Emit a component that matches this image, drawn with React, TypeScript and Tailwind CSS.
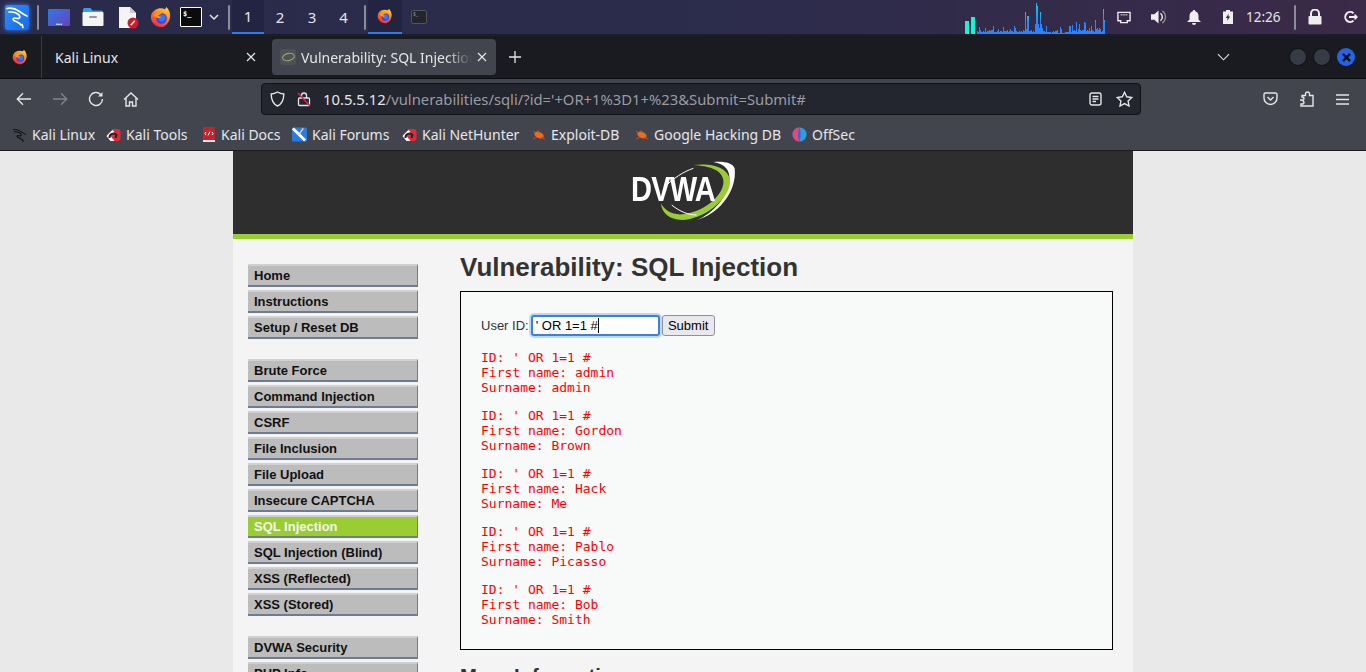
import React from "react";

const ui = { fontFamily: '"Noto Sans", sans-serif' };

function Firefox({ size = 22 }: { size?: number }) {
  return (
    <svg width={size} height={size} viewBox="0 0 24 24">
      <defs>
        <linearGradient id="ffa" x1="0.700" y1="0" x2="0.200" y2="1">
          <stop offset="0" stopColor="#ffd23a" />
          <stop offset="0.45" stopColor="#ff7a1f" />
          <stop offset="1" stopColor="#e3224d" />
        </linearGradient>
      </defs>
      <path d="M12 2.500c1.500 0 3 .3 4.200 1 .8-.6 1.200-1.500 1.400-2.500 2.600 2 4.400 5.500 4.400 9.500 0 6-4.500 12.500-10 12.500S1 18 1 12.500c0-2 .6-3.900 1.500-5.400C3.700 6 4.500 5 5.500 4.300 7.300 3.100 9.600 2.500 12 2.500z" fill="url(#ffa)" />
      <circle cx="12.500" cy="13.500" r="5.800" fill="#5a3bd0" />
      <circle cx="13" cy="13" r="3.800" fill="#2f7bf0" />
      <path d="M4 9.500C7 7 11 6.500 13.500 8.500c-2.500 0-4 1-4.500 2.500 1 .5 2.500.5 3.500 1-1.500 1.500-4 1.500-5.500.5C5.800 11.700 5 10.700 4 9.500z" fill="#ff9a26" />
    </svg>
  );
}

function KaliDragon({ color = "#fff", size = 24 }: { color?: string; size?: number }) {
  return (
    <svg width={size} height={size} viewBox="0 0 24 24" fill="none" stroke={color} strokeWidth="1.700" strokeLinecap="round" strokeLinejoin="round">
      <path d="M2 3.500c5-1 9 .5 12.500 3 2.500 1.800 5 3.500 7.500 4.500" />
      <path d="M4 7c3-.5 7 .5 9.500 2.500 1.500 1.200 1.800 3 .5 3.800-1.300.8-3-.3-4.500-.3-1.500 0-2 1.500-.5 2.500 2 1.300 5 1.500 7 4.500" />
      <path d="M17 19.500c.5 1 .8 2 .8 3" />
    </svg>
  );
}

function KaliTile() {
  return (
    <div className="w-6 h-[25px] rounded-[2px] flex items-center justify-center shadow-[0_0_5px_#2b7bff] bg-[linear-gradient(135deg,#2f8cff,#1a6ae0)]">
      <KaliDragon />
    </div>
  );
}

function TermIcon() {
  return (
    <div className="w-[22px] h-5 bg-[#0b0b0d] border border-white rounded-[1px] text-white text-[7px] leading-[9px] font-bold pl-[2px] pt-[2px]" style={{ fontFamily: '"DejaVu Sans Mono", monospace' }}>
      $_
    </div>
  );
}

function NetGraph() {
  const h = [3,2,7,4,2,2,3,2,6,2,3,3,4,3,4,4,8,2,2,2,3,5,2,3,3,2,7,3,3,3,4,2,3,5,3,3,2,8,6,3,2,2,3,2,3,2,4,3,22,5,18,18,3,3,4,2,3,2,10,31,28,10,6,22,10,6,3,3,2,8,2,2,2,2,1,2,3,2,3,3,4,1,1,7,5,1,1,1,2,2,2,2,8,8,2,9,3,4,3,12,2,5,10,4,3,4,4,12,11,3,4,3,6,3,8,4,3,2,14,5,6,4,6,5,2,3,25,14];
  return (
    <div className="flex items-end h-[34px] w-[140px]">
      <div className="w-[4px] h-[13px] bg-[#14f5d6]" />
      <div className="w-[4px] h-[17px] ml-[2px] mr-[2px] bg-[#14f5d6]" />
      {h.map((v, i) => (
        <div key={i} className="w-[1px] bg-[linear-gradient(0deg,#2a84ff_0%,#2a84ff_12px,#14c8e6_100%)]" style={{ height: v }} />
      ))}
    </div>
  );
}

function Sep() {
  return <div className="w-[2px] h-[25px] bg-[#8d8d99] rounded-sm" />;
}

function TopPanel() {
  return (
    <div className="h-[36px] flex items-center bg-[linear-gradient(90deg,#2a2a4a_0%,#2b2c4c_50%,#3b2a48_100%)] text-[#e6e6e6] border-b-2 border-[#1d1d27]" style={ui}>
      <div className="pl-[5px] w-[37px]"><KaliTile /></div>
      <Sep />
      <div className="w-[9px]" />
      <div className="w-[22px] h-[17px] rounded-[1px] bg-[linear-gradient(135deg,#2f78e8,#6a42b8)] flex items-end justify-center text-white text-[8px] leading-[8px] font-bold">...</div>
      <div className="w-[12px]" />
      <svg width="22" height="20" viewBox="0 0 22 20"><path d="M1 2.500a1.500 1.500 0 0 1 1.500-1.500h6l2 2.500h9a1.500 1.500 0 0 1 1.500 1.500v1H1z" fill="#3a9af0" /><rect x="0.500" y="5" width="21" height="14" rx="1" fill="#f4f4f4" /><rect x="7" y="9" width="8" height="2" rx="1" fill="#999" /></svg>
      <div className="w-[14px]" />
      <svg width="21" height="23" viewBox="0 0 21 23"><path d="M1 1h11l6 6v15H1z" fill="#f4f4f4" /><path d="M12 1l6 6h-6z" fill="#c9c9c9" /><circle cx="15" cy="17" r="5.500" fill="#d3182a" /><path d="M12.800 19.200l4-4.400" stroke="#fff" strokeWidth="1.600" /></svg>
      <div className="w-[11px]" />
      <Firefox />
      <div className="w-[8px]" />
      <TermIcon />
      <svg className="ml-[6px]" width="12" height="12" viewBox="0 0 12 12" fill="none" stroke="#e6e6e6" strokeWidth="1.500"><path d="M2 4l4 4 4-4" /></svg>
      <div className="w-[8px]" />
      <Sep />
      <div className="w-[2px]" />
      <div className="flex h-[34px] text-[15px]">
        <div className="w-[32px] flex items-center justify-center bg-[#232442] border-b-[2px] border-[#2a7cf0]">1</div>
        <div className="w-[32px] flex items-center justify-center">2</div>
        <div className="w-[32px] flex items-center justify-center">3</div>
        <div className="w-[31px] flex items-center justify-center">4</div>
      </div>
      <div className="w-[5px]" />
      <Sep />
      <div className="w-[2px]" />
      <div className="w-[34px] h-[34px] flex items-center justify-center bg-[#232442] border-b-[2px] border-[#2a7cf0]"><Firefox size={16} /></div>
      <div className="w-[34px] h-[34px] flex items-center justify-center">
        <div className="w-[16px] h-[14px] rounded-[2px] bg-[#23252c] border border-[#555] text-[#999] text-[5px] leading-[6px] pl-[1px]">$_</div>
      </div>
      <div className="flex-1" />
      <NetGraph />
      <div className="w-[12px]" />
      <svg width="14" height="13" viewBox="0 0 15 13" fill="none"><path d="M1 1h13v9h-3v2H4v-2H1z" stroke="#eee" strokeWidth="1.500" /><path d="M4 3.500h7" stroke="#eee" strokeWidth="1.500" strokeDasharray="1 1" /></svg>
      <div className="w-[20px]" />
      <svg width="17" height="16" viewBox="0 0 18 16"><path d="M0 5h3.500L8 1v14l-4.500-4H0z" fill="#eee" /><path d="M10 4a5 5 0 0 1 0 8" stroke="#eee" strokeWidth="1.500" fill="none" /><path d="M12 1.500a8 8 0 0 1 0 13" stroke="#888" strokeWidth="1.500" fill="none" /></svg>
      <div className="w-[19px]" />
      <svg width="14" height="15" viewBox="0 0 14 15"><path d="M7 0a1.300 1.300 0 0 1 1.300 1.300C10.500 2 11.500 3.800 11.500 6v3.500L14 12H0l2.500-2.500V6C2.500 3.800 3.500 2 5.700 1.300A1.300 1.300 0 0 1 7 0z" fill="#eee" /><path d="M5 13h4a2 2 0 0 1-4 0z" fill="#eee" /></svg>
      <div className="w-[22px]" />
      <svg width="10" height="14" viewBox="0 0 10 14"><path d="M3 0h4v1.500h3V14H0V1.500h3z" fill="#eee" /><path d="M5.800 3.500L2.800 8h1.800L4 11l3.200-4.500H5.300z" fill="#2c2840" /></svg>
      <div className="w-[13px]" />
      <span className="text-[13.500px] w-[35px] whitespace-nowrap">12:26</span>
      <div className="w-[13px]" />
      <Sep />
      <div className="w-[12px]" />
      <svg width="14" height="16" viewBox="0 0 14 16"><path d="M3 7V4.500a4 4 0 0 1 8 0V7" stroke="#eee" strokeWidth="2" fill="none" /><rect x="0.500" y="7" width="13" height="8.500" rx="1" fill="#eee" /></svg>
      <div className="w-[21px]" />
      <svg width="15" height="14" viewBox="0 0 15 14" fill="none" stroke="#eee" strokeWidth="2"><path d="M10.500 3.200A5 5 0 1 0 10.500 10.800" /><path d="M6 7h8" /><path d="M11.500 4.500L14 7l-2.500 2.500" strokeWidth="1.500" /></svg>
      <div className="w-[8px]" />
    </div>
  );
}

function X({ size = 10, color = "#e6e6e6" }: { size?: number; color?: string }) {
  return (
    <svg width={size} height={size} viewBox="0 0 10 10" stroke={color} strokeWidth="1.200"><path d="M1 1l8 8M9 1l-8 8" /></svg>
  );
}

function TabBar() {
  return (
    <div className="h-[43px] bg-[#1a1b20] flex items-center text-[#e4e5e8] text-[14px] border-b border-[#0d0e11]" style={ui}>
      <div className="w-[42px] flex justify-center border-r border-[#3b3c42] h-full items-center pr-[2px]"><Firefox size={16} /></div>
      <div className="w-[228px] flex items-center pl-[13px] pr-[14px] justify-between">
        <span>Kali Linux</span>
        <X />
      </div>
      <div className="w-[2px]" />
      <div className="w-[224px] h-[36px] bg-[#42454d] rounded-[4px] flex items-center pl-[8px] pr-[9px]">
        <div className="w-[16px] h-[16px] rounded-[3px] bg-[#4f5356] flex items-center justify-center mr-[5px] shrink-0">
          <div className="w-[13px] h-[8px] rounded-[50%] border-[1.500px] border-[#9fb070] -rotate-12" />
        </div>
        <span className="overflow-hidden whitespace-nowrap flex-1 mr-[5px] [mask-image:linear-gradient(90deg,#000_85%,transparent)]">Vulnerability: SQL Injection</span>
        <X />
      </div>
      <svg className="ml-[13px]" width="12" height="12" viewBox="0 0 13 13" stroke="#e6e6e6" strokeWidth="1.400"><path d="M6.500 0v13M0 6.500h13" /></svg>
      <div className="flex-1" />
      <svg width="13" height="8" viewBox="0 0 14 8" fill="none" stroke="#e4e5e8" strokeWidth="1.200"><path d="M1 1l6 6 6-6" /></svg>
      <div className="w-[59px]" />
      <div className="flex items-center gap-[6px] pr-[11px]">
        <div className="w-[18px] h-[18px] rounded-full bg-[#373b45] border border-[#111]" />
        <div className="w-[18px] h-[18px] rounded-full bg-[#373b45] border border-[#111]" />
        <div className="w-[18px] h-[18px] rounded-full bg-[#2464e6] flex items-center justify-center">
          <svg width="9" height="9" viewBox="0 0 10 10" stroke="#06122c" strokeWidth="2.600"><path d="M1 1l8 8M9 1l-8 8" /></svg>
        </div>
      </div>
    </div>
  );
}

function Toolbar() {
  const s = { stroke: "#e4e5e8", strokeWidth: 1.400, fill: "none" };
  return (
    <div className="h-[43px] bg-[#42454d] flex items-center pb-[3px]" style={ui}>
      <div className="w-[16px]" />
      <svg width="16" height="14" viewBox="0 0 16 14" {...s}><path d="M15 7H1.500M7 1.200L1.300 7 7 12.800" /></svg>
      <div className="w-[20px]" />
      <svg width="16" height="14" viewBox="0 0 16 14" {...s} stroke="#80838a"><path d="M1 7h13.500M9 1.200L14.700 7 9 12.800" /></svg>
      <div className="w-[20px]" />
      <svg width="16" height="16" viewBox="0 0 16 16" {...s}><path d="M14.500 8A6.500 6.500 0 1 1 12.600 3.400" /><path d="M14.500 1v4.500H10z" fill="#e4e5e8" stroke="none" /></svg>
      <div className="w-[19px]" />
      <svg width="16" height="15" viewBox="0 0 16 15" {...s}><path d="M1 7.500L8 1l7 6.500" /><path d="M3 6v8h3.500v-4h3v4H13V6" /></svg>
      <div className="w-[122px]" />
      <div className="w-[880px] h-[32px] bg-[#23252f] border border-[#101116] rounded-[4px] flex items-center pl-[8px] pr-[7px]">
        <svg width="15" height="16" viewBox="0 0 15 16" {...s}><path d="M7.500 1C5.500 2.200 3.500 2.800 1.200 3c0 5 1 9.500 6.300 12 5.300-2.500 6.300-7 6.300-12C11.500 2.800 9.500 2.200 7.500 1z" /></svg>
        <div className="w-[12px]" />
        <svg width="14" height="16" viewBox="0 0 14 16" fill="none"><path d="M4.500 7V4.500a2.500 2.500 0 0 1 5 0V7" stroke="#e4e5e8" strokeWidth="1.300" /><rect x="1.500" y="7" width="11" height="7.500" rx="1" stroke="#e4e5e8" strokeWidth="1.300" /><path d="M1 2l12 13" stroke="#e0264a" strokeWidth="1.500" /></svg>
        <div className="w-[12px]" />
        <span className="text-[14.800px] whitespace-nowrap text-[#e6e7ea]">10.5.5.12<span className="text-[#9a9ca2]">/vulnerabilities/sqli/?id='+OR+1%3D1+%23&amp;Submit=Submit#</span></span>
        <div className="flex-1" />
        <svg width="13" height="14" viewBox="0 0 13 14" {...s}><rect x="1" y="1" width="11" height="12" rx="2" /><path d="M3.500 4.500h6M3.500 7h6M3.500 9.500h3.500" /></svg>
        <div className="w-[14px]" />
        <svg width="17" height="16" viewBox="0 0 17 16" {...s}><path d="M8.500 1.300l2.200 4.500 5 .7-3.600 3.500.9 5-4.500-2.400L4 15l.9-5L1.300 6.500l5-.7z" /></svg>
      </div>
      <div className="flex-1" />
      <svg width="15" height="14" viewBox="0 0 15 14" {...s}><path d="M1 2.500A1.500 1.500 0 0 1 2.500 1h10A1.500 1.500 0 0 1 14 2.500V6a6.500 6.500 0 0 1-13 0z" /><path d="M4.500 5l3 3 3-3" /></svg>
      <div className="w-[21px]" />
      <svg width="16" height="16" viewBox="0 0 16 16" {...s}><path d="M1 9h2.500a1.500 1.500 0 1 0 0-3H3V4.500h3.500V3a2 2 0 1 1 4 0v1.500H14V15H2v-2h1.500a1.500 1.500 0 1 0 0-3" /></svg>
      <div className="w-[21px]" />
      <svg width="13" height="11" viewBox="0 0 13 11" stroke="#e4e5e8" strokeWidth="1.400"><path d="M0 1h13M0 5.500h13M0 10h13" /></svg>
      <div className="w-[17px]" />
    </div>
  );
}

function ShieldMark() {
  return (
    <svg width="15" height="14" viewBox="0 0 14 14"><path d="M0 7L6 1h6l2 2v8l-2 2H8z" fill="#e02b3c" /><path d="M0 8l6-6 2 2-4 4 4 5H4z" fill="#fff" /><path d="M3 10a4 4 0 0 1 7-3l-1 3" stroke="#222" strokeWidth="2" fill="none" /></svg>
  );
}

function Bug() {
  return (
    <svg width="14" height="12" viewBox="0 0 14 12"><ellipse cx="7" cy="6" rx="5" ry="3" fill="#ef6a1f" transform="rotate(25 7 6)" /><path d="M1 2l3 2M1 10l4-2M6 1l1 3M13 10l-4-2" stroke="#c85216" strokeWidth="1" /></svg>
  );
}

function Bookmarks() {
  const items: [React.ReactNode, string, string][] = [
    [<KaliDragon color="#111" size={16} />, "Kali Linux", "w-[94px]"],
    [<ShieldMark />, "Kali Tools", "w-[95px]"],
    [<svg width="14" height="15" viewBox="0 0 14 15"><rect x="1" width="12" height="14" rx="1" fill="#c8202c" /><rect x="1" y="13" width="12" height="2" fill="#e8e8e8" /><path d="M4 5L3 6.500 4 8M10 5l1 1.500L10 8M8 4.500L6 8.500" stroke="#fff" strokeWidth="1" fill="none" /></svg>, "Kali Docs", "w-[91px]"],
    [<svg width="16" height="15" viewBox="0 0 16 15"><rect width="16" height="15" rx="2" fill="#2a7be0" /><path d="M1 1l13 13" stroke="#fff" strokeWidth="3" /><path d="M12 1L7 8" stroke="#ddd" strokeWidth="1.500" /></svg>, "Kali Forums", "w-[110px]"],
    [<ShieldMark />, "Kali NetHunter", "w-[129px]"],
    [<Bug />, "Exploit-DB", "w-[103px]"],
    [<Bug />, "Google Hacking DB", "w-[158px]"],
    [<svg width="15" height="15" viewBox="0 0 15 15"><circle cx="7.500" cy="7.500" r="7" fill="#3e63d8" /><path d="M7.500.5a7 7 0 0 0 0 14c-2-3-2-11 0-14z" fill="#e04a7a" /><path d="M7.500.5a7 7 0 0 1 0 14c1.500-3 1.500-11 0-14z" fill="#2aa0d8" /></svg>, "OffSec", "w-[70px]"],
  ];
  return (
    <div className="h-[29px] bg-[#42454d] flex items-center pl-[12px] pb-[3px] text-[14px] text-[#e6e7ea] border-b border-[#1a1b20]" style={ui}>
      {items.map(([icon, label, w]) => (
        <div key={label} className={`flex items-center gap-[5px] ${w} shrink-0`}>
          <span className="shrink-0 w-[15px] flex justify-center">{icon}</span>
          <span className="whitespace-nowrap">{label}</span>
        </div>
      ))}
    </div>
  );
}

function MenuItem({ label, active }: { label: string; active?: boolean }) {
  return (
    <div
      className={`h-[23px] w-[170px] mb-[3px] border-t-2 border-t-[#d0d0d0] border-b-2 border-b-[#6d7c91] border-r border-r-[#6d7c91] pl-[6px] font-bold text-[13px] leading-[19px] ${
        active ? "bg-[#9acd32] text-[#f4f4f4]" : "bg-[#bcbcbc] text-[#111]"
      }`}
    >
      {label}
    </div>
  );
}

function Logo() {
  return (
    <div className="relative w-[160px] h-[83px] mr-[6px]">
      <svg className="absolute inset-0" width="160" height="83" viewBox="0 3 480 249">
        <path d="M290 210C350 195 412 130 404 55C398 38 370 33 340 36C375 42 392 60 388 95C382 140 340 190 290 210Z" fill="#fff" />
        <path d="M280 45C340 38 385 55 390 90C395 130 340 190 270 207C220 218 185 195 183 160C195 185 225 200 265 190C330 175 375 125 370 90C365 60 330 48 280 45Z" fill="#9acd32" />
        <path d="M195 110C220 85 250 65 280 55" stroke="#fff" strokeWidth="3" fill="none" />
        <path d="M215 165C240 185 265 195 290 195" stroke="#fff" strokeWidth="3" fill="none" />
      </svg>
      <span className="absolute left-[31px] top-[18px] text-[35px] leading-[40px] font-bold text-white tracking-[-1px] origin-left scale-x-[0.83] whitespace-nowrap" style={{ fontFamily: '"Liberation Sans", sans-serif' }}>DVWA</span>
    </div>
  );
}

function Result({ first, last }: { first: string; last: string }) {
  return (
    <pre className="text-[13px] leading-[15px] text-[#ff0000] mb-[13px]" style={{ fontFamily: '"DejaVu Sans Mono", monospace' }}>
      {"ID: ' OR 1=1 #\n"}
      {`First name: ${first}\n`}
      {`Surname: ${last}`}
    </pre>
  );
}

function Page() {
  const g1 = ["Home", "Instructions", "Setup / Reset DB"];
  const g2 = ["Brute Force", "Command Injection", "CSRF", "File Inclusion", "File Upload", "Insecure CAPTCHA", "SQL Injection", "SQL Injection (Blind)", "XSS (Reflected)", "XSS (Stored)"];
  const g3 = ["DVWA Security", "PHP Info", "About"];
  return (
    <div className="bg-[#e9e9e9] flex-1 min-h-0 overflow-hidden flex justify-center" style={{ fontFamily: '"Liberation Sans", Arial, sans-serif' }}>
      <div className="w-[900px] bg-[#f4f4f4]">
        <div className="h-[83px] bg-[#2e2e2e] flex items-center justify-center">
          <Logo />
        </div>
        <div className="h-[5px] bg-[#9acd32]" />
        <div className="flex pt-[25px] pl-[15px]">
          <div className="w-[212px] shrink-0">
            {g1.map((x) => <MenuItem key={x} label={x} />)}
            <div className="h-[17px]" />
            {g2.map((x) => <MenuItem key={x} label={x} active={x === "SQL Injection"} />)}
            <div className="h-[17px]" />
            {g3.map((x) => <MenuItem key={x} label={x} />)}
          </div>
          <div className="w-[653px]">
            <h1 className="text-[26px] leading-[30px] font-bold text-[#333] -mt-[12px] mb-[9px]">Vulnerability: SQL Injection</h1>
            <div className="h-[359px] border border-black bg-[#f8f9f9] pl-[20px] pt-[23px]">
              <div className="flex items-center h-[21px] mb-[14px] text-[13px] text-[#333]">
                <span className="mr-[2px]">User ID:</span>
                <div className="relative w-[129px] h-[21px] bg-white border-2 border-[#3b82e0] rounded-[3px] shadow-[0_0_0_2px_#bcd8f8] text-[13px] leading-[17px] text-black pl-[3px] whitespace-nowrap">
                  ' OR 1=1 #<span className="inline-block w-[1px] h-[15px] bg-black align-[-3px]" />
                </div>
                <button className="ml-[2px] w-[53px] h-[21px] bg-[#e9e9ed] border border-[#8f8f9d] rounded-[3px] text-[13px] text-black leading-[18px]">Submit</button>
              </div>
              <Result first="admin" last="admin" />
              <Result first="Gordon" last="Brown" />
              <Result first="Hack" last="Me" />
              <Result first="Pablo" last="Picasso" />
              <Result first="Bob" last="Smith" />
            </div>
            <h2 className="text-[20.300px] leading-[24px] font-bold text-[#333] mt-[14px]">More Information</h2>
          </div>
        </div>
      </div>
    </div>
  );
}

export default function App() {
  return (
    <div className="w-[1366px] h-[672px] overflow-hidden flex flex-col">
      <TopPanel />
      <TabBar />
      <Toolbar />
      <Bookmarks />
      <Page />
    </div>
  );
}
